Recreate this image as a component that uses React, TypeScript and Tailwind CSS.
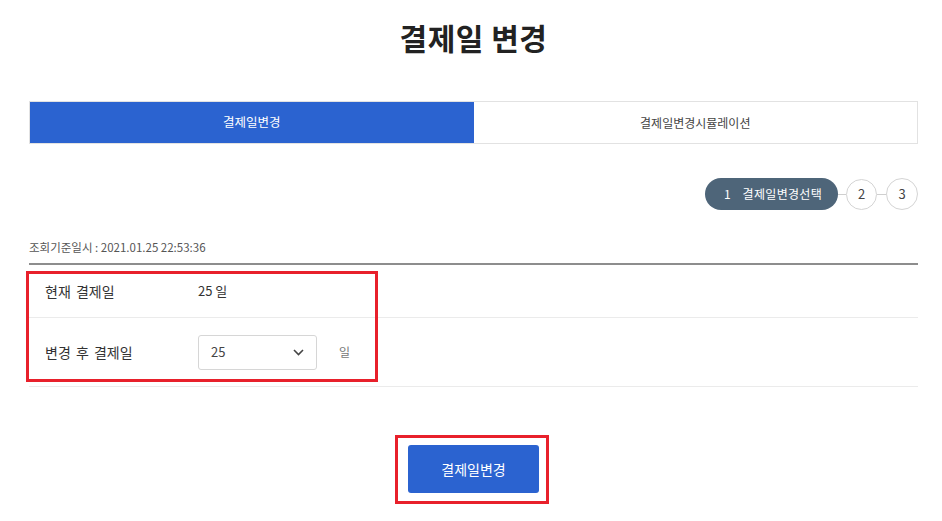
import React from 'react';

const FONT = "font-['Noto_Sans_CJK_KR','Noto_Sans',sans-serif]";

// Step indicator (1 active pill, 2 and 3 as circles)
function Steps() {
  return (
    <div className="flex items-center justify-end">
      <div className="flex h-[32px] items-center gap-[12px] rounded-full bg-[#4e6579] pl-[19px] pr-[16px] text-[12px] text-white">
        <span>1</span>
        <span className="tracking-[0.3px]">결제일변경선택</span>
      </div>
      <div className="h-px w-[8px] bg-[#cfcfcf]" />
      <div className="flex h-[31px] w-[31px] items-center justify-center rounded-full border border-[#d4d4d4] bg-white text-[13px] text-[#444]">
        2
      </div>
      <div className="h-px w-[9px] bg-[#cfcfcf]" />
      <div className="flex h-[32px] w-[32px] items-center justify-center rounded-full border border-[#d4d4d4] bg-white text-[13px] text-[#444]">
        3
      </div>
    </div>
  );
}

export default function App() {
  return (
    <div className={`${FONT} relative min-h-[521px] w-[942px] bg-white pl-[29px] pr-[24px] text-[#333]`}>
      {/* ── Title ── */}
      <h1 className="pt-[18px] text-center text-[30px] font-bold leading-[38px] tracking-[0.5px] text-[#222]">결제일 변경</h1>

      {/* ── Tabs ── */}
      <div className="mt-[45px] flex h-[43px] border border-[#e2e2e2]">
        <button className="flex-1 bg-[#2b63d0] text-[12.5px] text-white">결제일변경</button>
        <button className="flex-1 bg-white text-[12px] text-[#444]">결제일변경시뮬레이션</button>
      </div>

      <div className="mt-[34px]">
        <Steps />
      </div>

      {/* ── Query time ── */}
      <p className="mt-[29px] text-[11.5px] leading-[16px] text-[#555]">
        조회기준일시 : 2021.01.25 22:53:36
      </p>

      {/* ── Form rows ── */}
      <div className="mt-[8px] border-t-2 border-[#8d8d8d]">
        <div className="flex h-[53px] items-center border-b border-[#ebebeb] pl-[16px] text-[14px] [word-spacing:2px]">
          <span className="w-[153px] text-[#333]">현재 결제일</span>
          <span className="text-[13px] text-[#333] [word-spacing:0]">25 일</span>
        </div>
        <div className="flex h-[69px] items-center border-b border-[#ebebeb] pl-[16px] text-[14px] [word-spacing:2px]">
          <span className="w-[153px] text-[#333]">변경 후 결제일</span>
          <div className="flex h-[35px] w-[119px] items-center justify-between rounded-[3px] border border-[#d6d6d6] pl-[12px] pr-[12px]">
            <span className="text-[13px] text-[#444]">25</span>
            <svg width="11" height="7" viewBox="0 0 11 7" fill="none">
              <path d="M1 1l4.5 4.5L10 1" stroke="#444" strokeWidth="1.6" />
            </svg>
          </div>
          <span className="ml-[22px] text-[12px] text-[#777]">일</span>
        </div>
      </div>

      {/* ── Submit ── */}
      <div className="mt-[58px] flex justify-center">
        <button className="h-[48px] w-[131px] rounded-[3px] bg-[#2b63d0] text-[14px] text-white">결제일변경</button>
      </div>

      {/* ── Annotation boxes ── */}
      <div className="pointer-events-none absolute left-[26px] top-[271px] h-[111px] w-[352px] border-[3px] border-[#e8202b]" />
      <div className="pointer-events-none absolute left-[395px] top-[435px] h-[69px] w-[154px] border-[3px] border-[#e8202b]" />
    </div>
  );
}
